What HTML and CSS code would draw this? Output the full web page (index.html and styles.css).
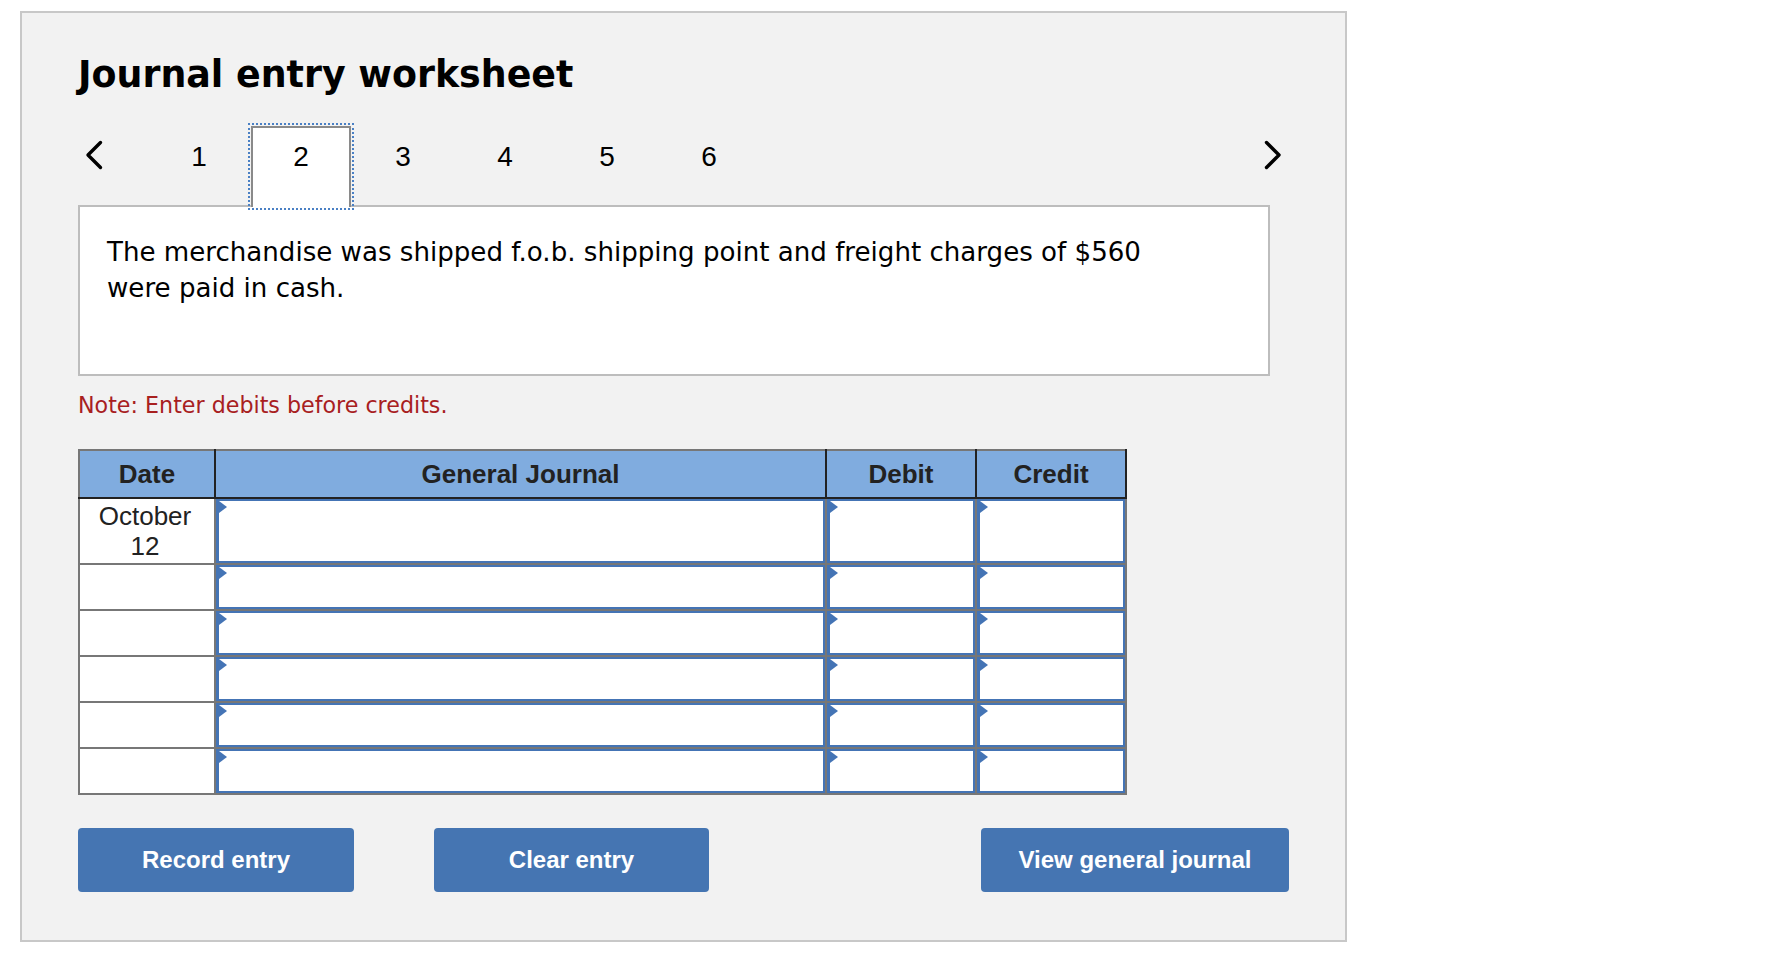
FILE: index.html
```html
<!DOCTYPE html>
<html lang="en">
<head>
<meta charset="utf-8">
<title>Journal entry worksheet</title>
<link rel="stylesheet" href="styles.css">
</head>
<body>
<div class="worksheet">
  <h1 class="title">Journal entry worksheet</h1>

  <div class="nav">
    <button class="arrow prev" type="button" aria-label="Previous">
      <svg viewBox="0 0 18 30"><polyline points="15.5,2.5 3,15 15.5,27.5" /></svg>
    </button>
    <div class="tabs">
      <span class="tab">1</span>
      <span class="tab active">2</span>
      <span class="tab">3</span>
      <span class="tab">4</span>
      <span class="tab">5</span>
      <span class="tab">6</span>
    </div>
    <button class="arrow next" type="button" aria-label="Next">
      <svg viewBox="0 0 18 30"><polyline points="2.5,2.5 15,15 2.5,27.5" /></svg>
    </button>
  </div>

  <div class="question">
    <p>The merchandise was shipped f.o.b. shipping point and freight charges of $560 were paid in cash.</p>
  </div>

  <p class="note">Note: Enter debits before credits.</p>

  <table class="journal">
    <colgroup>
      <col class="c-date">
      <col class="c-gj">
      <col class="c-num">
      <col class="c-num">
    </colgroup>
    <thead>
      <tr>
        <th>Date</th>
        <th>General Journal</th>
        <th>Debit</th>
        <th>Credit</th>
      </tr>
    </thead>
    <tbody>
      <tr class="first">
        <td class="date">October<br>12</td>
        <td><div class="field"></div></td>
        <td><div class="field"></div></td>
        <td><div class="field"></div></td>
      </tr>
      <tr>
        <td class="date"></td>
        <td><div class="field"></div></td>
        <td><div class="field"></div></td>
        <td><div class="field"></div></td>
      </tr>
      <tr>
        <td class="date"></td>
        <td><div class="field"></div></td>
        <td><div class="field"></div></td>
        <td><div class="field"></div></td>
      </tr>
      <tr>
        <td class="date"></td>
        <td><div class="field"></div></td>
        <td><div class="field"></div></td>
        <td><div class="field"></div></td>
      </tr>
      <tr>
        <td class="date"></td>
        <td><div class="field"></div></td>
        <td><div class="field"></div></td>
        <td><div class="field"></div></td>
      </tr>
      <tr>
        <td class="date"></td>
        <td><div class="field"></div></td>
        <td><div class="field"></div></td>
        <td><div class="field"></div></td>
      </tr>
    </tbody>
  </table>

  <div class="actions">
    <button class="btn record" type="button">Record entry</button>
    <button class="btn clear" type="button">Clear entry</button>
    <button class="btn view" type="button">View general journal</button>
  </div>
</div>
</body>
</html>
```

FILE: styles.css
```css
* {
  box-sizing: border-box;
}

body {
  margin: 0;
  background: #ffffff;
  font-family: "DejaVu Sans", Verdana, sans-serif;
  color: #000;
}

.worksheet {
  width: 1327px;
  margin: 11px 0 0 20px;
  border: 2px solid #c8c8c8;
  background: #f2f2f2;
  padding: 0 56px 48px;
}

.title {
  margin: 41px 0 0;
  font-family: "DejaVu Sans", Verdana, sans-serif;
  font-weight: bold;
  font-size: 36.4px;
  line-height: 42px;
  color: #000;
}

/* navigation */
.nav {
  display: flex;
  align-items: flex-start;
  margin-top: 29.5px;
  margin-bottom: -2px;
  position: relative;
  z-index: 1;
}

.arrow {
  width: 32px;
  height: 30px;
  margin-top: 14.5px;
  padding: 0;
  border: 0;
  background: none;
  display: flex;
  justify-content: center;
}

.arrow svg {
  width: 18px;
  height: 30px;
  fill: none;
  stroke: #000;
  stroke-width: 3.4;
  stroke-linecap: round;
  stroke-linejoin: round;
}

.next {
  margin-left: auto;
}

.tabs {
  display: flex;
  gap: 2px;
  margin-left: 39px;
}

.tab {
  width: 100px;
  height: 81.5px;
  border: 2px solid transparent;
  border-bottom: 0;
  padding-top: 13px;
  text-align: center;
  font-family: "Liberation Sans", Arial, sans-serif;
  font-size: 28px;
  line-height: 32px;
  color: #000;
}

.tab.active {
  background: #fff;
  border-color: #8a8a8a;
  outline: 2px dotted #4a80c4;
  outline-offset: 1px;
}

/* question */
.question {
  width: 1192px;
  height: 171px;
  border: 2px solid #bdbdbd;
  background: #fff;
  padding: 27px 27px;
  font-size: 26.1px;
  line-height: 36px;
  color: #000;
}

.question p {
  margin: 0;
  max-width: 1060px;
}

.note {
  margin: 16.4px 0 0;
  font-size: 22.2px;
  line-height: 26px;
  color: #a8201f;
}

/* journal table */
.journal {
  margin-top: 30.6px;
  border-collapse: collapse;
  table-layout: fixed;
  width: 1047px;
  border: 2px solid #777;
  font-family: "Liberation Sans", Arial, sans-serif;
  font-size: 26px;
  color: #222;
}

.c-date { width: 136px; }
.c-gj { width: 611px; }
.c-num { width: 150px; }

.journal th {
  background: #80acdf;
  height: 46px;
  line-height: 46px;
  padding: 0;
  border: 2px solid #222;
  border-top-color: #777;
  font-weight: bold;
  text-align: center;
}

.journal th:first-child {
  border-left-color: #777;
}

.journal td {
  border: 2px solid #777;
  padding: 0;
  background: #fff;
  vertical-align: top;
}

.journal td.date {
  text-align: center;
  vertical-align: middle;
  line-height: 30px;
  padding-right: 4px;
  color: #222;
}

.field {
  position: relative;
  height: 44px;
  border: 2px solid #4474b5;
  border-left-width: 3px;
  background: #fff;
}

.first .field {
  height: 64px;
}

.field::before {
  content: "";
  position: absolute;
  left: 0;
  top: 0;
  border-left: 8px solid #4474b5;
  border-top: 6.5px solid transparent;
  border-bottom: 6.5px solid transparent;
}

/* buttons */
.actions {
  display: flex;
  margin-top: 33px;
}

.btn {
  height: 64px;
  border: 0;
  border-radius: 4px;
  background: #4575b2;
  color: #fff;
  font-family: "Liberation Sans", Arial, sans-serif;
  font-weight: bold;
  font-size: 24px;
  padding: 0;
}

.record { width: 276px; }
.clear { width: 275px; margin-left: 80px; }
.view { width: 308px; margin-left: auto; }
```
